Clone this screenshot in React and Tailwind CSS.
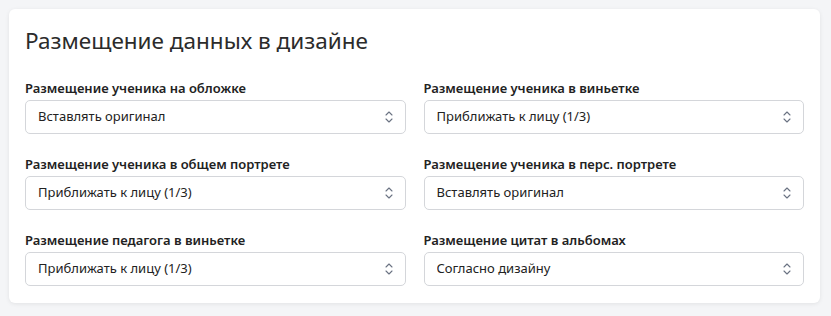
import { useState } from "react"

const FIELDS = [
  { key: "cover", label: "Размещение ученика на обложке", value: "Вставлять оригинал" },
  { key: "vignette", label: "Размещение ученика в виньетке", value: "Приближать к лицу (1/3)" },
  { key: "group", label: "Размещение ученика в общем портрете", value: "Приближать к лицу (1/3)" },
  { key: "personal", label: "Размещение ученика в перс. портрете", value: "Вставлять оригинал" },
  { key: "teacher", label: "Размещение педагога в виньетке", value: "Приближать к лицу (1/3)" },
  { key: "quotes", label: "Размещение цитат в альбомах", value: "Согласно дизайну" },
]

const OPTIONS = ["Вставлять оригинал", "Приближать к лицу (1/3)", "Согласно дизайну"]

function Chevrons() {
  return (
    <svg width="10" height="14" viewBox="0 0 10 14" fill="none" className="text-gray-500">
      <path d="M2 5 L5 2 L8 5" stroke="currentColor" strokeWidth="1.1" strokeLinecap="round" strokeLinejoin="round" />
      <path d="M2 9 L5 12 L8 9" stroke="currentColor" strokeWidth="1.1" strokeLinecap="round" strokeLinejoin="round" />
    </svg>
  )
}

export default function App() {
  const [values, setValues] = useState(() =>
    Object.fromEntries(FIELDS.map(f => [f.key, f.value]))
  )

  return (
    <div className="min-h-screen bg-[#f4f5f7] pt-[9px] pl-[9px] pr-[11px] font-['Noto_Sans','Open_Sans',sans-serif]">
      <div className="bg-white rounded-md shadow-[0_1px_4px_rgba(0,0,0,0.08)] px-4 pt-[17px] pb-[17px]">
        <h2 className="text-[22.5px] leading-[30px] font-normal text-[#2b2b2b] mb-[23px]">
          Размещение данных в дизайне
        </h2>

        <div className="grid grid-cols-2 gap-x-[18px] gap-y-[21px]">
          {FIELDS.map(field => (
            <div key={field.key}>
              <label className="block text-[13px] leading-[18px] font-semibold text-[#222] mb-[3px]">
                {field.label}
              </label>
              <div className="relative">
                <select
                  value={values[field.key]}
                  onChange={e => setValues(v => ({ ...v, [field.key]: e.target.value }))}
                  className="appearance-none w-full h-[34px] rounded-[5px] border border-[#d4d6da] bg-white pl-3 pr-8 text-[13px] text-[#222] outline-none"
                >
                  {OPTIONS.map(o => (
                    <option key={o} value={o}>{o}</option>
                  ))}
                </select>
                <div className="pointer-events-none absolute right-[12px] top-1/2 -translate-y-1/2 flex">
                  <Chevrons />
                </div>
              </div>
            </div>
          ))}
        </div>
      </div>
    </div>
  )
}
